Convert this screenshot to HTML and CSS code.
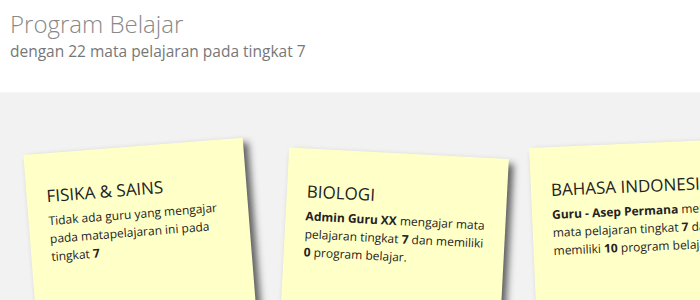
FILE: index.html
```html
<!DOCTYPE html>
<html lang="id">
<head>
    <meta charset="UTF-8">
    <meta name="viewport" content="width=device-width, initial-scale=1.0">
    <title>Program Belajar</title>
    <link rel="stylesheet" href="styles.css">
</head>
<body>

    <div class="header">
        <h1>Program Belajar</h1>
        <p class="subtitle">dengan 22 mata pelajaran pada tingkat 7</p>
    </div>

    <div class="board">
        <ul class="notes">
            <li class="note note-1">
                <h2>FISIKA &amp; SAINS</h2>
                <p>Tidak ada guru yang mengajar pada matapelajaran ini pada tingkat <b>7</b></p>
            </li>
            <li class="note note-2">
                <h2>BIOLOGI</h2>
                <p><b>Admin Guru XX</b> mengajar mata pelajaran tingkat <b>7</b> dan memiliki <b>0</b> program belajar.</p>
            </li>
            <li class="note note-3">
                <h2>BAHASA INDONESIA</h2>
                <p><b>Guru - Asep Permana</b> mengajar mata pelajaran tingkat <b>7</b> dan memiliki <b>10</b> program belajar.</p>
            </li>
        </ul>
    </div>

</body>
</html>
```

FILE: styles.css
```css
body {
    margin: 0;
    background-color: #fff;
    font-family: "Open Sans", "Liberation Sans", sans-serif;
    overflow: hidden;
}
.header {
    height: 93px;
    padding: 0 10px;
    box-sizing: border-box;
    border-bottom: 1px solid #f6f6f6;
}
.header h1 {
    margin: 0;
    padding-top: 8px;
    font-size: 24px;
    font-weight: 300;
    line-height: 32px;
    color: #888;
}
.subtitle {
    margin: 0;
    font-size: 15.5px;
    line-height: 22px;
    color: #777;
}
.board {
    background-color: #f2f2f2;
    height: 300px;
}
.notes {
    list-style: none;
    margin: 0;
    padding: 0 0 0 32px;
    display: flex;
    align-items: flex-start;
    gap: 31px;
}
.note {
    flex: none;
    width: 220px;
    height: 230px;
    box-sizing: border-box;
    padding: 31px 12px 20px 20px;
    background-color: #ffffc8;
    color: #222;
    box-shadow: 5px 5px 7px rgba(33, 33, 33, .7);
}
.note h2 {
    margin: 0 0 4px;
    font-size: 17px;
    font-weight: 500;
    line-height: 24px;
    white-space: nowrap;
}
.note p {
    margin: 0;
    font-size: 12px;
    line-height: 18px;
}
.note b {
    font-weight: 700;
}
.note-1 {
    margin-top: 53px;
    transform: rotate(-4.5deg);
}
.note-2 {
    margin-top: 60px;
    transform: rotate(3deg);
}
.note-3 {
    margin-top: 50px;
    transform: rotate(-2.5deg);
}
```
